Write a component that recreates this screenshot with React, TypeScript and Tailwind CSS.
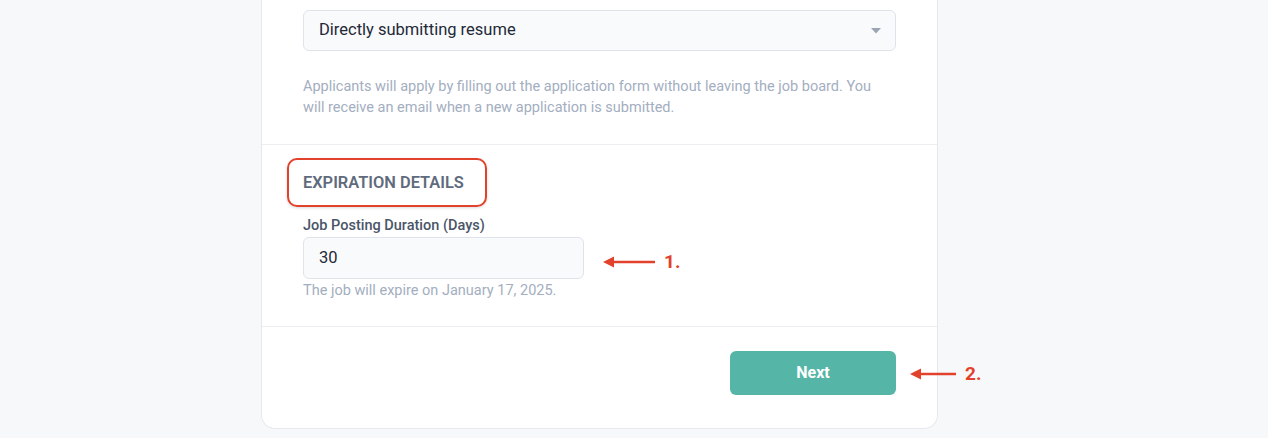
import React from "react";

function Arrow({ label, len = 52 }: { label: string; len?: number }) {
  return (
    <div className="flex items-center">
      <svg width={len} height="14" viewBox={`0 0 ${len} 14`} aria-hidden="true">
        <path d={`M9 7 H${len}`} stroke="#e2412c" strokeWidth="2.5" />
        <path d="M0 7 L11 1.5 L11 12.5 Z" fill="#e2412c" />
      </svg>
      <span className="ml-[9px] text-[19px] font-bold text-[#e2412c] leading-none">{label}</span>
    </div>
  );
}

export default function App() {
  return (
    <div
      className="min-h-[438px] w-full bg-[#f7f8fa] overflow-hidden"
      style={{ fontFamily: "Roboto, 'Liberation Sans', sans-serif" }}
    >
      <div className="ml-[261px] w-[677px] -mt-[20px] bg-white border border-[#e6e8ee] border-t-0 rounded-b-[14px]">
        {/* Apply by */}
        <div className="px-[41px] pb-[26px]">
          <label className="block text-[14.5px] font-medium text-[#4a5568] leading-[20px] mb-[10px]">
            Apply By
          </label>
          <div className="relative h-[41px] rounded-[6px] border border-[#dfe3ea] bg-[#f9fafc] flex items-center pl-[15px]">
            <span className="text-[16.5px] text-[#1f2937]">Directly submitting resume</span>
            <svg className="absolute right-[14px] top-[17px]" width="10" height="6" viewBox="0 0 10 6">
              <path d="M0 0 H10 L5 5.5 Z" fill="#9aa5b4" />
            </svg>
          </div>
          <p className="mt-[25px] max-w-[572px] text-[14.5px] leading-[21px] text-[#a3aec0]">
            Applicants will apply by filling out the application form without leaving the job board. You
            will receive an email when a new application is submitted.
          </p>
        </div>

        {/* Expiration */}
        <div className="border-t border-[#eceef2] px-[41px] pt-[26px] pb-[25px]">
          <div className="relative inline-block">
            <h3 className="text-[16.4px] font-semibold text-[#5f6b7d] leading-[20px]">
              EXPIRATION DETAILS
            </h3>
            <div className="absolute -left-[16px] -top-[15px] w-[200px] h-[49px] rounded-[10px] border-2 border-[#e2412c] shadow-[0_1px_3px_rgba(0,0,0,0.15)]" />
          </div>
          <label className="block mt-[21px] text-[14.5px] font-medium text-[#4a5568] leading-[20px]">
            Job Posting Duration (Days)
          </label>
          <div className="relative mt-[1px] w-[281px]">
            <div className="h-[42px] rounded-[6px] border border-[#dfe3ea] bg-[#f9fafc] flex items-center pl-[15px]">
              <span className="text-[16.5px] text-[#1f2937]">30</span>
            </div>
            <div className="absolute left-[300px] top-[15px]">
              <Arrow label="1." />
            </div>
          </div>
          <p className="mt-[2px] text-[14.5px] leading-[20px] text-[#a3aec0]">
            The job will expire on January 17, 2025.
          </p>
        </div>

        {/* Footer */}
        <div className="border-t border-[#eceef2] px-[41px] pt-[24px] pb-[33px] flex justify-end">
          <div className="relative">
            <button className="w-[166px] h-[44px] rounded-[6px] bg-[#55b5a6] text-white text-[16px] font-bold">
              Next
            </button>
            <div className="absolute left-[180px] top-[13px]">
              <Arrow label="2." len={46} />
            </div>
          </div>
        </div>
      </div>
    </div>
  );
}
